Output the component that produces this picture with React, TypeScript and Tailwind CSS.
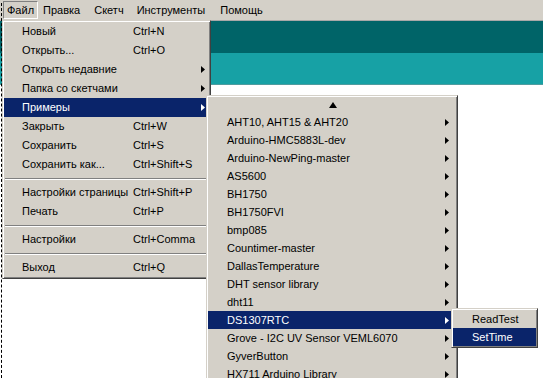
import React from "react";

type Item = {
  label: string;
  shortcut?: string;
  sub?: boolean;
  active?: boolean;
  sep?: boolean;
};

const fileItems: Item[] = [
  { label: "Новый", shortcut: "Ctrl+N" },
  { label: "Открыть...", shortcut: "Ctrl+O" },
  { label: "Открыть недавние", sub: true },
  { label: "Папка со скетчами", sub: true },
  { label: "Примеры", sub: true, active: true },
  { label: "Закрыть", shortcut: "Ctrl+W" },
  { label: "Сохранить", shortcut: "Ctrl+S" },
  { label: "Сохранить как...", shortcut: "Ctrl+Shift+S" },
  { label: "", sep: true },
  { label: "Настройки страницы", shortcut: "Ctrl+Shift+P" },
  { label: "Печать", shortcut: "Ctrl+P" },
  { label: "", sep: true },
  { label: "Настройки", shortcut: "Ctrl+Comma" },
  { label: "", sep: true },
  { label: "Выход", shortcut: "Ctrl+Q" },
];

const examples = [
  "AHT10, AHT15 & AHT20",
  "Arduino-HMC5883L-dev",
  "Arduino-NewPing-master",
  "AS5600",
  "BH1750",
  "BH1750FVI",
  "bmp085",
  "Countimer-master",
  "DallasTemperature",
  "DHT sensor library",
  "dht11",
  "DS1307RTC",
  "Grove - I2C UV Sensor VEML6070",
  "GyverButton",
  "HX711 Arduino Library",
];

const menuBox =
  "absolute bg-[#d4d0c8] border border-t-[#d4d0c8] border-l-[#d4d0c8] border-b-[#404040] border-r-[#404040] shadow-[inset_1px_1px_0_#ffffff,inset_-1px_-1px_0_#808080] p-[1px]";

function Arrow({ white }: { white?: boolean }) {
  return (
    <svg width="4" height="7" viewBox="0 0 4 7" className="shrink-0">
      <path d="M0 0 L4 3.5 L0 7 Z" fill={white ? "#ffffff" : "#000000"} />
    </svg>
  );
}

export default function App() {
  return (
    <div
      className="relative w-[543px] h-[378px] overflow-hidden bg-white text-[11px] text-black"
      style={{ fontFamily: '"Liberation Sans", Arial, sans-serif' }}
    >
      {/* menu bar */}
      <div className="flex h-[20px] items-center bg-[#d4d0c8]">
        <div className="ml-[3px] flex h-[18px] items-center border border-t-[#808080] border-l-[#808080] border-b-white border-r-white px-[3px]">
          Файл
        </div>
        <div className="ml-[5px]">Правка</div>
        <div className="ml-[14px]">Скетч</div>
        <div className="ml-[13px]">Инструменты</div>
        <div className="ml-[15px]">Помощь</div>
      </div>
      <div className="h-[1px] bg-[#a8a8a8]" />
      <div className="h-[32px] bg-[#006468]" />
      <div className="h-[32px] border-b border-b-[#4f9c9f] bg-[#17a1a5]" />

      {/* focus rectangle edge */}
      <div className="absolute left-[1px] top-[3px] bottom-0 border-l border-dashed border-l-[#000000]" />

      {/* File menu */}
      <div className={`${menuBox} left-[2px] top-[20px] w-[209px]`}>
        {fileItems.map((it, i) =>
          it.sep ? (
            <div key={i} className="flex h-[9px] items-center px-[1px]">
              <div className="h-[2px] w-full border-t border-t-[#808080] border-b border-b-white" />
            </div>
          ) : (
            <div
              key={i}
              className={`flex h-[19px] items-center pl-[18px] pr-[4px] ${
                it.active ? "bg-[#0a246a] text-white" : ""
              }`}
            >
              <span className="w-[111px] whitespace-nowrap">{it.label}</span>
              <span className="flex-1 whitespace-nowrap">{it.shortcut}</span>
              {it.sub && <Arrow white={it.active} />}
            </div>
          )
        )}
      </div>

      {/* Examples submenu */}
      <div className={`${menuBox} left-[206px] top-[95px] w-[252px]`}>
        <div className="flex h-[16px] items-center justify-center pl-[2px]">
          <svg width="8" height="6" viewBox="0 0 8 6">
            <path d="M0 6 L4 0 L8 6 Z" fill="#000" />
          </svg>
        </div>
        {examples.map((name) => {
          const active = name === "DS1307RTC";
          return (
            <div
              key={name}
              className={`flex h-[18px] items-center pl-[19px] pr-[7px] ${
                active ? "bg-[#0a246a] text-white" : ""
              }`}
            >
              <span className="flex-1 whitespace-nowrap">{name}</span>
              <Arrow white={active} />
            </div>
          );
        })}
      </div>

      {/* DS1307RTC submenu */}
      <div className={`${menuBox} left-[451px] top-[308px] w-[87px]`}>
        <div className="flex h-[18px] items-center pl-[19px]">ReadTest</div>
        <div className="flex h-[18px] items-center bg-[#0a246a] pl-[19px] text-white">
          SetTime
        </div>
      </div>
    </div>
  );
}
